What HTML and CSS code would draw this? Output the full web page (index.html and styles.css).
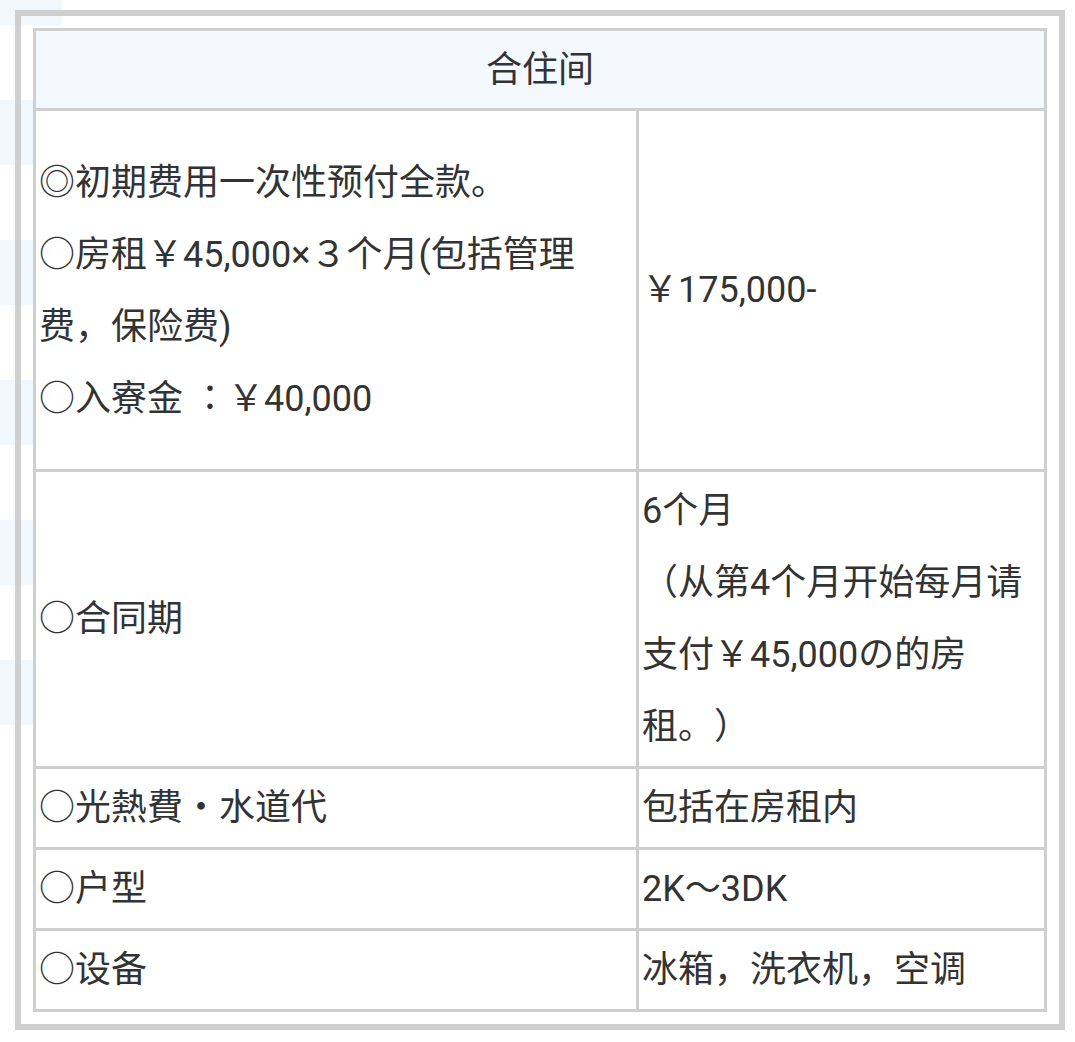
FILE: index.html
```html
<!DOCTYPE html>
<html lang="zh-CN">
<head>
<meta charset="utf-8">
<title>合住间</title>
<link rel="stylesheet" href="styles.css">
</head>
<body>
<div class="bg-stripes" aria-hidden="true"></div>
<div class="frame">
  <table class="plan">
    <thead>
      <tr><th class="plan-title" colspan="2">合住间</th></tr>
    </thead>
    <tbody>
      <tr>
        <td class="label label-tall">
          <p class="line">◎初期费用一次性预付全款。</p>
          <p class="line">○房租￥45,000×３个月(包括管理<br>费，保险费)</p>
          <p class="line">○入寮金 <span class="jp" lang="ja">：</span>￥40,000</p>
        </td>
        <td class="value">￥175,000-</td>
      </tr>
      <tr>
        <td class="label">○合同期</td>
        <td class="value">6个月<br>（从第4个月开始每月请<br>支付￥45,000の的房<br>租。）</td>
      </tr>
      <tr>
        <td class="label">○光熱費・水道代</td>
        <td class="value">包括在房租内</td>
      </tr>
      <tr>
        <td class="label">○户型</td>
        <td class="value">2K～3DK</td>
      </tr>
      <tr>
        <td class="label">○设备</td>
        <td class="value">冰箱，洗衣机，空调</td>
      </tr>
    </tbody>
  </table>
</div>
</body>
</html>
```
FILE: styles.css
```css
html {
  margin: 0;
  padding: 0;
  background: #ffffff;
}

body {
  position: relative;
  margin: 0;
  padding: 0;
  min-height: 1042px;
  font-family: "Roboto", "Noto Sans CJK SC", "Noto Sans", sans-serif;
  color: #333333;
  text-spacing-trim: space-all;
}

.bg-stripes {
  position: absolute;
  left: 0;
  top: 0;
  width: 62px;
  height: 725px;
  z-index: -1;
  background: repeating-linear-gradient(
    to bottom,
    #f0f7fd 0 25px,
    transparent 25px 100px,
    #f0f7fd 100px 140px
  );
}

.frame {
  box-sizing: border-box;
  width: 1050px;
  margin: 10px 0 0 15px;
  padding: 12px;
  border: 6px solid #cfcfcf;
}

.plan {
  width: 1014px;
  border-collapse: separate;
  border-spacing: 0;
  border-top: 3px solid #cfcfcf;
  border-left: 3px solid #cfcfcf;
  background: #ffffff;
}

.plan th,
.plan td {
  padding: 3px;
  border-right: 3px solid #cfcfcf;
  border-bottom: 3px solid #cfcfcf;
  font-size: 36px;
  line-height: 72px;
  font-weight: 400;
  text-align: left;
  vertical-align: middle;
}

.plan .plan-title {
  padding: 3px 3px 2px;
  background: #f3f9fe;
  text-align: center;
}

.plan .label {
  width: 594px;
}

.plan .value {
  width: 399px;
}

.plan .label-tall {
  padding-top: 36px;
  padding-bottom: 34px;
}

.line {
  margin: 0;
}

.jp {
  font-family: "Roboto", "Noto Sans CJK JP", sans-serif;
}
```
